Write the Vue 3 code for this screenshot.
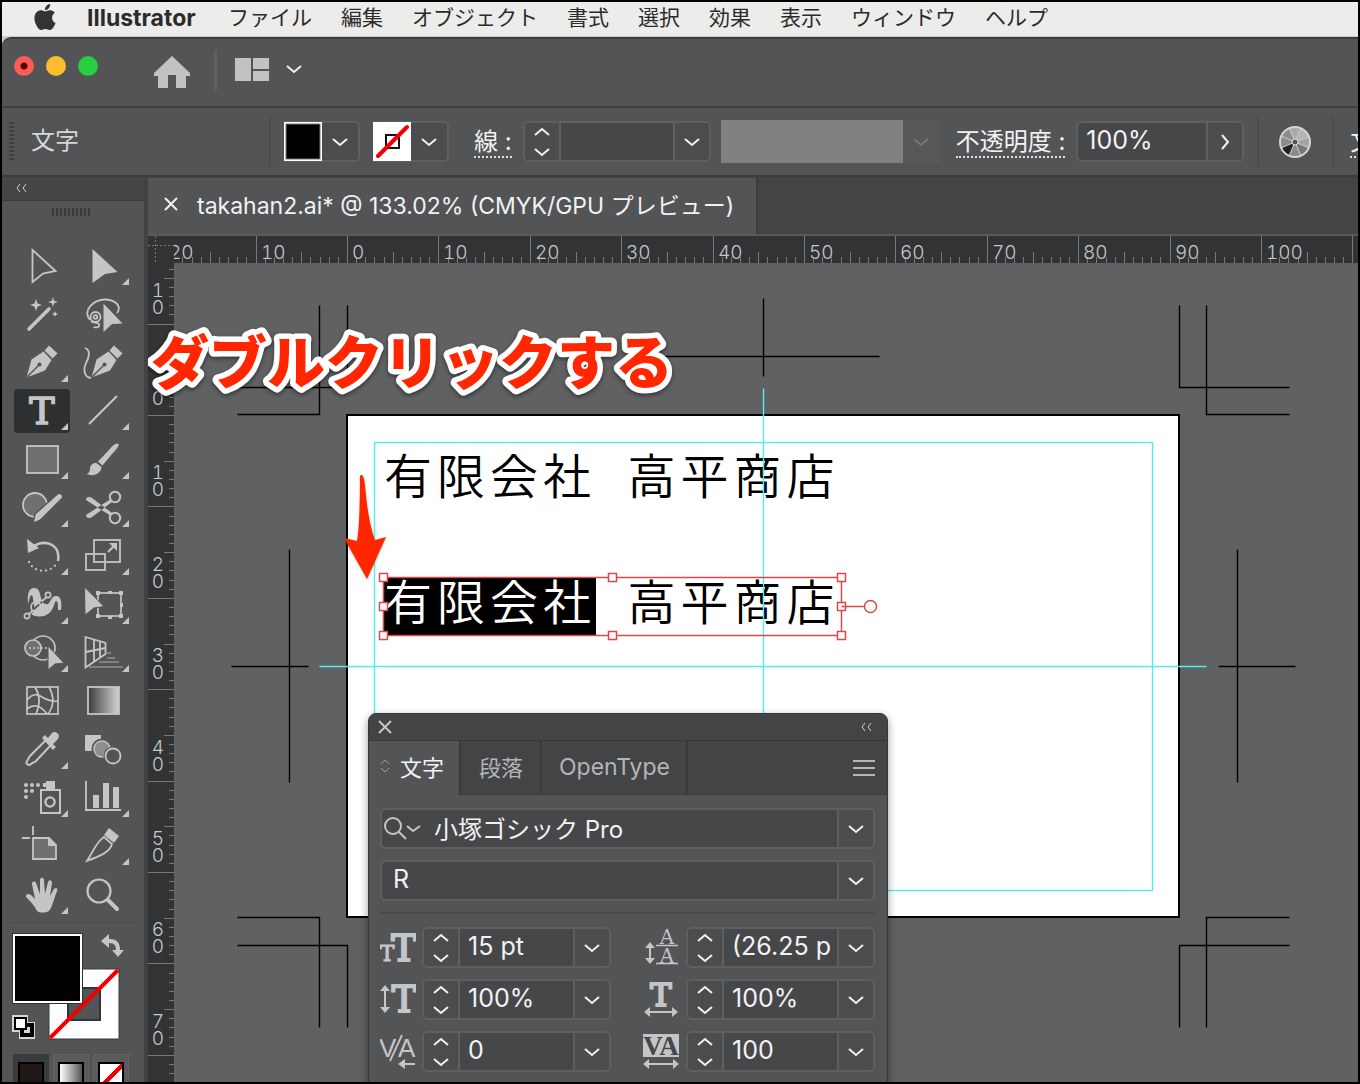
<script setup>
import { ref } from 'vue'

const menus = ['ファイル', '編集', 'オブジェクト', '書式', '選択', '効果', '表示', 'ウィンドウ', 'ヘルプ']

// Ruler geometry: one artboard centimetre is 91.4 screen pixels
const CM = 91.4
const hTicks = []
for (let mm = -19; mm <= 115; mm++) {
  const major = mm % 10 === 0
  hTicks.push({ x: Math.round(199 + (mm * CM) / 10), y: major ? 0 : mm % 5 === 0 ? 16 : 21 })
}
const hLabels = []
for (let cm = -2; cm <= 11; cm++) {
  hLabels.push({ x: Math.round(204 + cm * CM), text: String(Math.abs(cm * 10)) })
}
const vTicks = []
for (let mm = -16; mm <= 75; mm++) {
  const major = mm % 10 === 0
  vTicks.push({ y: Math.round(152 + (mm * CM) / 10), x: major ? 0 : mm % 5 === 0 ? 16 : 21 })
}
const vLabels = []
for (let cm = -1; cm <= 7; cm++) {
  const y = Math.round(152 + cm * CM)
  const digits = String(Math.abs(cm * 10)).split('')
  digits.forEach((d, i) => vLabels.push({ text: d, y: y - 10 - (digits.length - 1 - i) * 17 }))
}

// Printer's trim and centre marks, in canvas coordinates
const marks = [
  'M145 42V151H63', 'M173 42V124H63',
  'M1005 42V124H1115', 'M1032 42V151H1115',
  'M63 654H145V764', 'M63 682H173V764',
  'M1115 654H1032V764', 'M1115 682H1005V764',
  'M589 35V113M473 93H705',
  'M57 403H134M115 286V519',
  'M1044 403H1121M1063 286V519'
]
const handles = [[210, 314], [439, 314], [668, 314], [210, 343], [668, 343], [210, 372], [439, 372], [668, 372]]

const L = '#c4c5c7'
const B = '#535456'
const tools = [
  { name: '選択', art: `<path d="M-9.500-16L13.500 5L1 7.500L-9.500 16Z" fill="none" stroke="${L}" stroke-width="1.800"/>` },
  { name: 'ダイレクト選択', more: true, art: `<path d="M-10.500-17L14.500 6L2 8L-10.500 17Z"/>` },
  { name: '自動選択', art: `<path d="M-13 14L7-6" stroke="${L}" stroke-width="3.600" stroke-linecap="round"/><path d="M-6-16l1.600 4.400 4.400 1.600-4.400 1.600L-6-4l-1.600-4.400L-12-10l4.400-1.600zM11-18l1.200 3.800L16-13l-3.800 1.200L11-8l-1.200-3.800L6-13l3.800-1.200zM13-4l.9 2.100L16-1l-2.100.9L13 2l-.9-2.100L10-1l2.100-.9z"/>` },
  { name: 'なげなわ', art: `<g fill="none" stroke="${L}" stroke-width="1.800"><path d="M-13 5C-21-5-9-16 3-15.500C13-15 19-8 14-2"/><circle cx="-7.500" cy="2" r="5"/><circle cx="-7.500" cy="2" r="1.800"/><path d="M-12 6C-9 9-2 7-4 11C-5 14-9 11-9 13"/></g><path d="M.5-11.500L19.500 8.500L9 9L.5 17Z"/>` },
  { name: 'ペン', more: true, art: `<path d="M-15.500 14.500L-10.500-3.500L1.500-11.500L9.500-3L3 7.500Z"/><path d="M7-17.500L15.500-9.500L10.500-4.500L2.500-12.500Z"/><path d="M-15 14L-3 2" stroke="${B}" stroke-width="1.400"/><circle cx="-2.500" cy="1.500" r="2" fill="${B}"/>` },
  { name: '曲線', art: `<g transform="translate(4)"><path d="M-15.500 14.500L-10.500-3.500L1.500-11.500L9.500-3L3 7.500Z"/><path d="M7-17.500L15.500-9.500L10.500-4.500L2.500-12.500Z"/><path d="M-15 14L-3 2" stroke="${B}" stroke-width="1.400"/><circle cx="-2.500" cy="1.500" r="2" fill="${B}"/></g><path d="M-18-15C-12-13-14-5-17 0C-20 7-19 14-12 15" fill="none" stroke="${L}" stroke-width="1.800"/>` },
  { name: '文字', more: true, active: true, art: `<text x="0" y="13" text-anchor="middle" font-family="DejaVu Serif, serif" font-size="38" stroke="${L}" stroke-width="1.600">T</text>` },
  { name: '直線', more: true, art: `<path d="M-14 13L14-15" stroke="${L}" stroke-width="2.200"/>` },
  { name: '長方形', more: true, art: `<rect x="-15" y="-14" width="31" height="27" fill="#6f7072" stroke="${L}" stroke-width="1.800"/>` },
  { name: 'ブラシ', more: true, art: `<path d="M15.500-16C13.500-18 9-14 6-10L-5 1.500L-.5 5.500L9-6C13-10 17-15 15.500-16Z"/><path d="M-6.500 3C-10 2.500-13 5-13 9C-13 12-15 13.500-16.500 14C-10 17-2 14-1.500 7Z"/>` },
  { name: 'Shaper', more: true, art: `<circle cx="-7" cy="-3" r="12" fill="#6f7072" stroke="${L}" stroke-width="1.800"/><path d="M-9 15.500L-7 6L15.500-14C19-16 22-12 20-9.500L-1.500 12Z" stroke="${B}" stroke-width="1.400"/>` },
  { name: 'はさみ', more: true, art: `<g fill="none" stroke="${L}" stroke-width="2"><circle cx="12" cy="-11" r="5.200"/><circle cx="12" cy="10" r="5.200"/></g><path d="M-17-8C-17-11-14-12-11-10L9 5L8 8L0 3ZM-17 7C-17 10-14 11-11 9L9-6L8-9L0-4Z"/>` },
  { name: '回転', more: true, art: `<path d="M-11-8C-2-17 19-15 16 5" fill="none" stroke="${L}" stroke-width="2.600"/><path d="M-15-17L-14-3L-3-8Z"/><path d="M-13 6C-8 17 8 18 15 7" fill="none" stroke="${L}" stroke-width="2.200" stroke-linecap="round" stroke-dasharray=".1 5"/>` },
  { name: '拡大・縮小', more: true, art: `<g fill="none" stroke="${L}" stroke-width="1.800"><rect x="-9" y="-16" width="26" height="22"/><rect x="-17" y="-2" width="19" height="16"/><path d="M5-4L12-11" stroke-width="2.200"/></g><path d="M6-13H14V-5Z"/>` },
  { name: '線幅', more: true, art: `<path d="M-14-1C-15-12-13-17-8-17C-3-17-2-12-1-7C0-2 3 0 6-1C9-3 9-9 14-9C19-9 20-3 19 5L16 5C16 0 16-4 14-4C12-3 12 8 2 11C-4 12-9 11-11 9C-6 6-8 0-9-6C-9-10-11-11-12-8Z"/><g stroke="${L}" fill="none" stroke-width="1.700"><path d="M-8 4L0-3" stroke="${B}"/><path d="M-13 9L-9 5M0-4L5-8"/><circle cx="-6" cy="2" r="5"/><circle cx="6" cy="-10" r="2.600" fill="${B}"/><circle cx="-15" cy="11" r="2.600" fill="${B}"/></g>` },
  { name: '自由変形', more: true, art: `<rect x="-5" y="-12" width="23" height="23" fill="none" stroke="${L}" stroke-width="1.700"/><path d="M-7-14h4v4h-4zM5-14h4v3h-4zM16-14h4v4h-4zM-7 9h4v4h-4zM5 11h4v3h-4zM16 9h4v4h-4zM17-2h3v4h-3z"/><path d="M-18.500-18L1 1.500L-9 3L-18 10Z" stroke="${B}" stroke-width="1"/>` },
  { name: 'シェイプ形成', more: true, art: `<g fill="none" stroke="${L}" stroke-width="1.700"><circle cx="1" cy="-5" r="12"/><circle cx="-9" cy="-5" r="8" fill="#6f7072"/><path d="M-13-5H6" stroke-dasharray="2 2"/></g><path d="M6-7L22 10L13 11L6 17Z" stroke="${B}" stroke-width="1"/>` },
  { name: '遠近グリッド', more: true, art: `<path d="M4 0H8M4 5H12M-4 9H16M-14 14H20" stroke="#8d8e90" stroke-width="1.600"/><path d="M-17.500-16L2.500-10V1L-17.500 14.500ZM-17.500-1L2.500-5M-9-14V9M-3-12V5" fill="none" stroke="${L}" stroke-width="1.800"/>` },
  { name: 'メッシュ', art: `<g fill="none" stroke="${L}" stroke-width="1.700"><rect x="-15" y="-14" width="31" height="27"/><path d="M-15-1C-9-8-5-7 0-4S10 1 16 0M-7-14C-2-6-2 4-6 13M7-14C12-5 12 5 6 13M-15 8C-8 2-1 5 5 13"/></g>` },
  { name: 'グラデーション', art: `<defs><linearGradient id="toolGrad"><stop offset="0" stop-color="#3a3b3d"/><stop offset="1" stop-color="#d5d5d6"/></linearGradient></defs><rect x="-15" y="-14" width="31" height="27" fill="url(#toolGrad)" stroke="${L}" stroke-width="1.800"/>` },
  { name: 'スポイト', more: true, art: `<path d="M4-10L-12 6C-14 8-13 9-15 11C-17 14-13 16-11 14C-9 12-8 13-6 11L9-5" fill="none" stroke="${L}" stroke-width="2"/><path d="M0-12L3-15L6-12L10-17C14-20 19-15 16-11L11-6L14-3L11 0Z"/>` },
  { name: 'ブレンド', art: `<path d="M-18-15H-2V1H-18Z"/><circle cx="-1" cy="-1" r="9" fill="#8d8e90" stroke="${B}" stroke-width="3"/><circle cx="-1" cy="-1" r="8" fill="none" stroke="${L}" stroke-width="1.500"/><circle cx="10" cy="6" r="9.500" fill="${B}"/><circle cx="10" cy="6" r="7.500" fill="none" stroke="${L}" stroke-width="1.800"/>` },
  { name: 'シンボルスプレー', more: true, art: `<g fill="none" stroke="${L}" stroke-width="2"><rect x="-1" y="-8" width="19" height="23"/><circle cx="8" cy="4" r="4.600" stroke-width="2.400"/></g><path d="M4-17H13V-9H4ZM1-15H4V-11H1Z"/><circle cx="-16" cy="-13" r="2"/><circle cx="-10" cy="-13" r="2"/><circle cx="-4" cy="-13" r="2"/><circle cx="-16" cy="-7" r="2"/><circle cx="-10" cy="-7" r="2"/><circle cx="-16" cy="-1" r="2"/>` },
  { name: '棒グラフ', more: true, art: `<path d="M-17-17V12H18" fill="none" stroke="${L}" stroke-width="1.800"/><path d="M-10-3H-4V10H-10ZM0-15H6V10H0ZM10-11H16V10H10Z"/>` },
  { name: 'アートボード', art: `<path d="M-9-8H7L14-1V13H-9Z" fill="#6f7072" stroke="${L}" stroke-width="1.800"/><path d="M6-9V0H15Z"/><path d="M-9-20V-11M-20-8H-12" stroke="${L}" stroke-width="1.800"/>` },
  { name: 'スライス', more: true, art: `<path d="M6-18L16-10L11-3L1-11Z"/><path d="M1-9L9-2C7 6-3 10-16 15C-9 4-6-5 1-9Z" fill="none" stroke="${L}" stroke-width="1.800"/>` },
  { name: '手のひら', more: true, art: `<path d="M-5 16C-7 11-12 6-16 2C-17-1-13-2-11 0L-7 4L-10-11C-10-14-7-14-6-12L-2-1L-2-15C-2-18 2-18 2-15L3-1L6-13C7-16 10-15 10-12L8 1L12-6C14-8 16-7 15-4C12 3 11 11 7 16C3 18-2 18-5 16Z"/>` },
  { name: 'ズーム', art: `<circle cx="-4" cy="-4" r="11.500" fill="none" stroke="${L}" stroke-width="2.200"/><path d="M5 5L14 14" stroke="${L}" stroke-width="4" stroke-linecap="round"/>` }
]

const slab = `text-anchor="middle" font-family="DejaVu Serif, serif" stroke="${L}"`
const metrics = ref([
  { id: 'size', label: 'フォントサイズ', value: '15 pt', art: `<text x="24" y="32" font-size="38" stroke-width="2" ${slab}>T</text><text x="7" y="32" font-size="22" stroke-width="1" ${slab}>T</text>` },
  { id: 'leading', label: '行送り', value: '(26.25 p', art: `<g font-family="DejaVu Serif, serif" font-size="20" text-anchor="middle"><text x="24" y="15">A</text><text x="24" y="34">A</text></g><path d="M13 16.500H35M13 34.500H35" stroke="${L}" stroke-width="1.500"/><path d="M7 17V32" stroke="${L}" stroke-width="2"/><path d="M7 13L12 19H2ZM7 35L12 29H2Z"/>` },
  { id: 'vscale', label: '垂直比率', value: '100%', art: `<text x="24" y="31" font-size="37" stroke-width="2" ${slab}>T</text><path d="M5 8V28" stroke="${L}" stroke-width="2"/><path d="M5 4L10 10H0ZM5 32L10 26H0Z"/>` },
  { id: 'hscale', label: '水平比率', value: '100%', art: `<text x="18" y="25" font-size="32" stroke-width="2" ${slab}>T</text><path d="M5 31H31" stroke="${L}" stroke-width="2"/><path d="M1 31L7 26V36ZM35 31L29 26V36Z"/>` },
  { id: 'kerning', label: 'カーニング', value: '0', art: `<g font-family="Liberation Sans, sans-serif" font-size="26"><text x="-1" y="24">V</text><text x="18" y="24">A</text></g><path d="M10 28L22 2M22 31H35" stroke="${L}" stroke-width="1.800"/><path d="M18 31L25 26V36Z"/>` },
  { id: 'tracking', label: 'トラッキング', value: '100', art: `<path d="M0 1H36V24H0Z"/><g fill="#464749" font-size="27" font-family="Liberation Serif, serif" font-weight="700" text-anchor="middle"><text x="10" y="22">V</text><text x="26" y="22">A</text></g><path d="M5 31H31" stroke="${L}" stroke-width="2"/><path d="M0 31L6 26V36ZM36 31L30 26V36Z"/>` }
])
const strokeWidth = ref('')
const opacity = ref('100%')
const family = ref('小塚ゴシック Pro')
const fontStyle = ref('R')
</script>

<template>
  <div class="screen">
    <nav class="menubar">
      <svg class="apple" viewBox="0 0 24 24" aria-hidden="true"><path d="M12.152 6.896c-.948 0-2.415-1.078-3.960-1.040-2.040.027-3.910 1.183-4.961 3.014-2.117 3.675-.546 9.103 1.519 12.090 1.013 1.454 2.208 3.090 3.792 3.039 1.520-.065 2.090-.987 3.935-.987 1.831 0 2.350.987 3.960.948 1.637-.026 2.676-1.480 3.676-2.948 1.156-1.688 1.636-3.325 1.662-3.415-.039-.013-3.182-1.221-3.220-4.857-.026-3.040 2.480-4.494 2.597-4.559-1.429-2.090-3.623-2.324-4.390-2.376-2-.156-3.675 1.090-4.610 1.090zM15.530 3.830c.843-1.012 1.400-2.427 1.245-3.830-1.207.052-2.662.805-3.532 1.818-.780.896-1.454 2.338-1.273 3.714 1.338.104 2.715-.688 3.559-1.701" /></svg>
      <button class="menu app-name">Illustrator</button>
      <button v-for="m in menus" :key="m" class="menu">{{ m }}</button>
    </nav>

    <div class="window">
      <header class="titlebar">
        <div class="lights">
          <button class="light red" aria-label="閉じる"></button>
          <button class="light yellow" aria-label="しまう"></button>
          <button class="light green" aria-label="拡大"></button>
        </div>
        <button class="home" aria-label="ホーム">
          <svg width="36" height="36" viewBox="0 0 36 36"><path d="M18 4L36 21V24H32V36H22V23H14V36H4V24H0V21Z" fill="#c1c2c4" /></svg>
        </button>
        <span class="divider light-divider"></span>
        <button class="layout" aria-label="ワークスペース">
          <svg width="68" height="24" viewBox="0 0 68 24"><path d="M0 0H16V23H0ZM18 0H34V11H18ZM18 13H34V23H18Z" fill="#c1c2c4" /><path d="M52 8L59 14L66 8" fill="none" stroke="#f0f0f0" stroke-width="2" /></svg>
        </button>
      </header>

      <section class="controlbar">
        <span class="grip-v"></span>
        <span class="mode">文字</span>
        <span class="divider dark-divider"></span>
        <div class="swatch-field">
          <button class="swatch" aria-label="塗り"><svg width="38" height="39" viewBox="0 0 38 39"><rect width="38" height="39" fill="#fff" /><rect x="2" y="2" width="34" height="35" fill="#000" stroke="#777" stroke-width="1" /></svg></button>
          <button class="drop" aria-label="塗りの一覧"><svg width="16" height="10" viewBox="0 0 16 10"><path d="M1 2L8 8L15 2" /></svg></button>
        </div>
        <div class="swatch-field">
          <button class="swatch" aria-label="線"><svg width="38" height="39" viewBox="0 0 38 39"><rect width="38" height="39" fill="#fff" /><rect x="13" y="13" width="13" height="13" fill="none" stroke="#111" stroke-width="2" /><path d="M5 34L34 5" stroke="#f00000" stroke-width="4" stroke-linecap="round" /></svg></button>
          <button class="drop" aria-label="線の一覧"><svg width="16" height="10" viewBox="0 0 16 10"><path d="M1 2L8 8L15 2" /></svg></button>
        </div>
        <label class="underlined stroke-label" for="stroke">線 :</label>
        <div class="field stroke-field">
          <button class="stepper" aria-label="増減"><svg width="16" height="30" viewBox="0 0 16 30"><path d="M1 8L8 2L15 8M1 22L8 28L15 22" /></svg></button>
          <input id="stroke" v-model="strokeWidth" type="text" />
          <button class="drop" aria-label="線幅の一覧"><svg width="16" height="10" viewBox="0 0 16 10"><path d="M1 2L8 8L15 2" /></svg></button>
        </div>
        <div class="profile">
          <span class="profile-box"></span>
          <button class="drop" disabled aria-label="プロファイル"><svg width="16" height="10" viewBox="0 0 16 10"><path d="M1 2L8 8L15 2" /></svg></button>
        </div>
        <label class="underlined" for="opacity">不透明度 :</label>
        <div class="field opacity-field">
          <input id="opacity" v-model="opacity" type="text" />
          <button class="drop" aria-label="不透明度の設定"><svg width="10" height="16" viewBox="0 0 10 16"><path d="M2 1L8 8L2 15" /></svg></button>
        </div>
        <span class="divider dark-divider"></span>
        <button class="wheel" aria-label="オブジェクトを再配色">
          <svg width="34" height="34" viewBox="-17 -17 34 34">
            <circle r="15" fill="#8a8b8d" />
            <path d="M0 0L6-14A15 15 0 0 1 14-5Z" fill="#b4b5b6" /><path d="M0 0L14-5A15 15 0 0 1 14 6Z" fill="#a2a3a4" />
            <path d="M0 0L14 6A15 15 0 0 1 6 14Z" fill="#777" /><path d="M0 0L-6 14A15 15 0 0 1-14 6Z" fill="#222" />
            <path d="M0 0L-6-14A15 15 0 0 1 6-14Z" fill="#a9aaab" />
            <path d="M0 0L6 14M0 0L-6 14M0 0L-14 6M0 0L-14-6M0 0L-6-14M0 0L6-14M0 0L14-5M0 0L14 6" stroke="#ccc" stroke-width="1" />
            <circle r="15" fill="none" stroke="#d4d5d6" stroke-width="2" /><circle r="3" fill="#555" stroke="#ddd" />
          </svg>
        </button>
        <span class="divider dark-divider"></span>
        <a class="underlined" href="#">文字 :</a>
      </section>

      <main class="work">
        <aside class="toolbox">
          <div class="toolbox-head"><button class="collapse" aria-label="折りたたむ"><svg width="12" height="8" viewBox="0 0 12 8"><path d="M5 0L2 4L5 8M11 0L8 4L11 8" /></svg></button></div>
          <span class="grip-h"></span>
          <div class="tools">
            <button v-for="t in tools" :key="t.name" class="tool" :class="{ active: t.active }" :aria-label="t.name">
              <svg width="56" height="44" viewBox="-28 -22 56 44" fill="#c4c5c7">
                <g v-html="t.art"></g>
                <path v-if="t.more" d="M26 12V19H19Z" />
              </svg>
            </button>
          </div>
          <div class="colors">
            <button class="stroke-box" aria-label="線のカラー">
              <svg width="72" height="72" viewBox="0 0 72 72"><path d="M1 1H71V71H1ZM20 20V52H52V20Z" fill="#fff" fill-rule="evenodd" stroke="#3a3b3d" stroke-width="1" /><rect x="20" y="20" width="32" height="32" fill="none" stroke="#333" stroke-width="2" /><path d="M2 70L70 2" stroke="#f00000" stroke-width="4" /></svg>
            </button>
            <button class="fill-box" aria-label="塗りのカラー"></button>
            <button class="swap" aria-label="塗りと線を入れ替え">
              <svg width="24" height="24" viewBox="0 0 24 24"><path d="M6 7H9Q17 7 17 16V17" fill="none" stroke="#c4c5c7" stroke-width="4" /><path d="M8 0V14L0 7ZM11 16H23L17 23Z" fill="#c4c5c7" /></svg>
            </button>
            <button class="default" aria-label="初期設定">
              <svg width="24" height="24" viewBox="0 0 24 24"><path d="M0 0H16V7H23V24H7V17H0Z" fill="#d4d5d6" /><rect x="10" y="10" width="10" height="10" fill="none" stroke="#000" stroke-width="4" /><rect x="3" y="3" width="11" height="11" fill="#fff" stroke="#000" stroke-width="2" /></svg>
            </button>
          </div>
          <div class="paint-modes">
            <button class="mode-btn on" aria-label="カラー"><span class="chip solid"></span></button>
            <button class="mode-btn" aria-label="グラデーション"><span class="chip grad"></span></button>
            <button class="mode-btn" aria-label="なし"><span class="chip none"></span></button>
          </div>
        </aside>

        <section class="document">
          <div class="tabbar">
            <div class="doc-tab">
              <button class="close" aria-label="タブを閉じる"><svg width="14" height="14" viewBox="0 0 14 14"><path d="M1 1L13 13M13 1L1 13" /></svg></button>
              <span>takahan2.ai* @ 133.02% (CMYK/GPU プレビュー)</span>
            </div>
          </div>
          <div class="sheet">
            <div class="corner"></div>
            <svg class="ruler ruler-h">
              <g transform="translate(-26 0)">
                <path v-for="t in hTicks" :key="t.x" :d="`M${t.x} ${t.y}V27`" />
                <text v-for="l in hLabels" :key="l.x" :x="l.x" y="23">{{ l.text }}</text>
              </g>
            </svg>
            <svg class="ruler ruler-v">
              <path v-for="t in vTicks" :key="t.y" :d="`M${t.x} ${t.y}H26`" />
              <text v-for="l in vLabels" :key="l.y" x="10" :y="l.y" text-anchor="middle">{{ l.text }}</text>
            </svg>
            <div class="canvas">
              <div class="artboard"></div>
              <p class="art-text first">有限会社&nbsp;&nbsp;高平商店</p>
              <p class="art-text second"><mark>有限会社</mark>&nbsp;&nbsp;高平商店</p>
              <svg class="overlay">
                <g class="marks" transform="translate(.5 .5)"><path v-for="d in marks" :key="d" :d="d" /></g>
                <g class="guides" transform="translate(.5 .5)">
                  <path d="M589 125V500M145 403H1032" />
                  <rect x="200" y="179" width="778" height="448" />
                </g>
                <g class="bounds" transform="translate(-.5 .5)">
                  <rect x="210" y="314" width="458" height="58" />
                  <rect v-for="h in handles" :key="h.join()" class="handle" :x="h[0] - 4" :y="h[1] - 4" width="8" height="8" />
                  <path d="M668 343H691" />
                  <circle cx="697" cy="343" r="6" />
                </g>
                <path class="arrow" d="M186 213Q187 211 189 213Q190 215 191 222Q194 259 201 277L212 274L193 316L170 275L183 278Q186 262 186 213Z" />
                <text class="callout" x="-23" y="121">ダブルクリックする</text>
              </svg>

              <section class="panel">
                <div class="panel-head">
                  <button class="close" aria-label="パネルを閉じる"><svg width="14" height="14" viewBox="0 0 14 14"><path d="M1 1L13 13M13 1L1 13" /></svg></button>
                  <button class="collapse" aria-label="アイコン化"><svg width="12" height="8" viewBox="0 0 12 8"><path d="M5 0L2 4L5 8M11 0L8 4L11 8" /></svg></button>
                </div>
                <div class="panel-tabs">
                  <button class="ptab current"><svg width="10" height="14" viewBox="0 0 10 14"><path d="M1 5L5 1L9 5M1 9L5 13L9 9" /></svg>文字</button>
                  <button class="ptab">段落</button>
                  <button class="ptab latin">OpenType</button>
                  <button class="burger" aria-label="パネルメニュー"><svg width="22" height="16" viewBox="0 0 22 16"><path d="M0 1H22M0 8H22M0 15H22" /></svg></button>
                </div>
                <div class="panel-body">
                  <div class="field family-field">
                    <span class="finder"><svg width="38" height="24" viewBox="0 0 38 24"><circle cx="9" cy="9" r="8" /><path d="M15 15L22 22M23 9L29 14L36 9" /></svg></span>
                    <input v-model="family" type="text" aria-label="フォントファミリ" />
                    <button class="drop" aria-label="フォントの一覧"><svg width="16" height="10" viewBox="0 0 16 10"><path d="M1 2L8 8L15 2" /></svg></button>
                  </div>
                  <div class="field style-field">
                    <input v-model="fontStyle" type="text" aria-label="フォントスタイル" />
                    <button class="drop" aria-label="スタイルの一覧"><svg width="16" height="10" viewBox="0 0 16 10"><path d="M1 2L8 8L15 2" /></svg></button>
                  </div>
                  <hr />
                  <div class="metrics">
                    <div v-for="m in metrics" :key="m.id" class="metric">
                      <label :for="m.id" :aria-label="m.label"><svg width="36" height="37" viewBox="0 0 36 37" fill="#c4c5c7" v-html="m.art"></svg></label>
                      <div class="field">
                        <button class="stepper" aria-label="増減"><svg width="16" height="30" viewBox="0 0 16 30"><path d="M1 8L8 2L15 8M1 22L8 28L15 22" /></svg></button>
                        <input :id="m.id" v-model="m.value" type="text" />
                        <button class="drop" aria-label="値の一覧"><svg width="16" height="10" viewBox="0 0 16 10"><path d="M1 2L8 8L15 2" /></svg></button>
                      </div>
                    </div>
                  </div>
                </div>
              </section>
            </div>
          </div>
        </section>
      </main>
    </div>
  </div>
</template>

<style>
body { margin: 0; background: #000; }
</style>

<style scoped>
* { box-sizing: border-box; }
.screen {
  display: flex;
  flex-direction: column;
  height: 100vh;
  border: 2px solid #000;
  background: #c9cac9;
  overflow: hidden;
  font-family: Inter, "Noto Sans CJK JP", sans-serif;
  font-size: 22px;
  color: #f2f2f2;
}
button, input {
  margin: 0;
  padding: 0;
  border: 0;
  background: none;
  color: inherit;
  font: inherit;
}
svg { display: block; flex: none; }

.menubar {
  display: flex;
  align-items: center;
  gap: 29px;
  height: 34px;
  flex: none;
  padding: 0 0 2px 30px;
  background: #ecedeb;
  color: #2b2b2b;
}
.apple { width: 26px; height: 26px; fill: #333; margin-bottom: 2px; }
.menu { font-size: 21px; line-height: 32px; white-space: nowrap; }
.app-name { font-size: 23px; font-weight: 700; width: 112px; text-align: left; }

.window {
  flex: 1;
  min-height: 0;
  display: flex;
  flex-direction: column;
  margin-top: 1px;
  border-top: 2px solid #3b3c3e;
  border-radius: 9px 0 0 0;
  background: #535456;
}
.titlebar {
  display: flex;
  align-items: center;
  flex: none;
  height: 69px;
  padding: 0 0 6px 12px;
  border-bottom: 2px solid #3d3e40;
}
.lights { display: flex; gap: 12px; padding-bottom: 8px; margin-right: 56px; }
.light { width: 20px; height: 20px; border-radius: 50%; }
.red { background: radial-gradient(circle, #5a0500 3px, #fc5b57 4px); }
.yellow { background: #fdbc2e; }
.green { background: #28cd41; }
.divider { flex: none; align-self: center; }
.light-divider { width: 3px; height: 40px; margin: 0 18px 0 24px; background: #5f6062; }
.dark-divider { width: 2px; height: 50px; background: #4b4c4e; }

.controlbar {
  display: flex;
  align-items: center;
  flex: none;
  height: 69px;
  padding-left: 7px;
  border-bottom: 2px solid #3b3c3e;
  overflow: hidden;
  white-space: nowrap;
}
.grip-v { flex: none; width: 5px; height: 40px; background: repeating-linear-gradient(#3d3e40 0 2px, transparent 2px 4px); }
.mode { flex: none; width: 255px; padding-left: 17px; font-size: 24px; line-height: 36px; margin-bottom: 2px; color: #d6d7d8; }
.swatch-field { display: flex; flex: none; align-items: center; margin-left: 13px; border: 2px solid #5e5f61; border-left: 0; border-radius: 0 5px 5px 0; background: #4d4e50; height: 41px; }
.drop, .stepper {
  display: flex;
  align-items: center;
  justify-content: center;
  flex: none;
  width: 36px;
  align-self: stretch;
  background: #4b4c4e;
}
.drop svg, .stepper svg, .close svg, .collapse svg, .ptab svg, .burger svg, .finder svg { fill: none; stroke: #f2f2f2; stroke-width: 2; }
.drop { border-radius: 0 4px 4px 0; }
.underlined {
  flex: none;
  margin: 2px 0 0 16px;
  border-bottom: 2px dotted #e0e0e0;
  font-size: 24px;
  line-height: 29px;
  color: #f2f2f2;
  text-decoration: none;
}
.stroke-label { margin-left: 25px; }
.field {
  display: flex;
  align-items: stretch;
  flex: none;
  height: 41px;
  border: 2px solid #5e5f61;
  border-radius: 6px;
  background: #464749;
}
.field input {
  flex: 1;
  min-width: 0;
  width: 0;
  padding: 0 0 3px 8px;
  outline: 0;
  font-size: 25px;
}
.field .drop { border-left: 2px solid #5e5f61; }
.field .stepper { border-right: 2px solid #5e5f61; border-radius: 4px 0 0 4px; }
.stroke-field { width: 188px; margin-left: 11px; }
.profile { display: flex; flex: none; height: 43px; margin-left: 10px; }
.profile-box { width: 182px; background: #808183; }
.profile .drop { width: 37px; background: #575859; }
.profile .drop svg { stroke: #77787a; }
.opacity-field { width: 168px; margin: 0 13px 0 11px; }
.wheel { margin: 0 20px 0 19px; }

.work { display: flex; flex: 1; min-height: 0; }
.toolbox {
  display: flex;
  flex-direction: column;
  flex: none;
  width: 146px;
  border-right: 4px solid #414244;
  overflow: hidden;
}
.toolbox-head { display: flex; align-items: center; flex: none; height: 24px; padding: 0 0 2px 13px; background: #444547; border-bottom: 1px solid #3b3c3e; }
.collapse svg { stroke: #d0d1d2; stroke-width: 1px; }
.grip-h { flex: none; width: 40px; height: 8px; margin: 7px 0 26px 50px; background: repeating-linear-gradient(90deg, #3a3b3d 0 2px, transparent 2px 4px); }
.tools {
  display: grid;
  grid-template-columns: 61px 61px;
  grid-auto-rows: 1fr;
  flex: none;
  height: 677px;
  margin-left: 9px;
}
.tool { display: flex; align-items: center; justify-content: center; }
.tool svg { border-radius: 4px; overflow: visible; }
.tool.active svg { background: #2e2f31; }
.colors { position: relative; flex: none; height: 120px; margin: 3px 9px 0; border-top: 1px solid #4a4b4d; }
.colors button { position: absolute; }
.fill-box { left: 1px; top: 10px; width: 71px; height: 71px; border: 1px solid #333; background: #000; box-shadow: inset 0 0 0 2px #fff; }
.stroke-box { left: 37px; top: 45px; }
.swap { left: 90px; top: 11px; }
.default { left: 1px; top: 92px; }
.paint-modes { display: flex; flex: none; gap: 4px; margin: 12px 0 0 11px; height: 44px; }
.mode-btn { width: 36px; padding: 7px 4px 0; background: #5a5b5d; border: 1px solid #626365; display: flex; }
.mode-btn.on { background: #3a3b3d; border-color: #3a3b3d; }
.chip { width: 26px; height: 30px; border: 2px solid #000; }
.solid { background: #211815; }
.grad { background: linear-gradient(90deg, #fff, #555); }
.none { background: linear-gradient(135deg, #fff 42%, #f00000 42% 56%, #fff 56%); }

.document { display: flex; flex-direction: column; flex: 1; min-width: 0; }
.tabbar { display: flex; flex: none; height: 59px; padding-top: 1px; background: #434446; border-bottom: 2px solid #58595b; }
.doc-tab { display: flex; align-items: center; gap: 19px; width: 610px; padding: 0 0 4px 16px; background: #535456; border-right: 2px solid #3b3c3e; font-size: 23px; white-space: nowrap; }
.sheet { display: grid; grid-template-columns: 26px 1fr; grid-template-rows: 27px 1fr; flex: 1; min-height: 0; overflow: hidden; }
.corner {
  background:
    linear-gradient(90deg, #777 50%, transparent 50%) 0 9px / 4px 1px repeat-x,
    linear-gradient(#777 50%, transparent 50%) 7px 0 / 1px 4px repeat-y,
    #323335;
}
.ruler { width: 100%; height: 100%; background: #323335; overflow: hidden; }
.ruler path { stroke: #77787a; stroke-width: 1; shape-rendering: crispEdges; }
.ruler text { font-size: 19px; font-weight: 300; font-variant-numeric: tabular-nums; fill: #c6c7c8; }
.canvas { position: relative; min-width: 0; background: #606163; }
.artboard {
  position: absolute;
  left: 172px;
  top: 151px;
  width: 834px;
  height: 504px;
  border: 2px solid #000;
  background: #fff;
}
.art-text {
  position: absolute;
  left: 210px;
  margin: 0;
  font-family: "Noto Sans CJK JP", sans-serif;
  font-size: 48px;
  font-weight: 350;
  line-height: 44px;
  letter-spacing: 5px;
  color: #000;
  white-space: nowrap;
}
.art-text.first { top: 188px; }
.art-text.second { top: 314px; }
.art-text mark { display: inline-block; height: 58px; background: #000; color: #fff; }
.overlay { position: absolute; inset: 0; width: 100%; height: 100%; overflow: visible; }
.overlay path, .overlay rect { fill: none; }
.marks path { stroke: #000; stroke-width: 1.4; }
.guides { stroke: #4ff0f0; stroke-width: 1.4; }
.bounds { stroke: #e0474b; stroke-width: 1.5; fill: none; }
.overlay .handle { fill: #fff; }
.overlay .arrow { fill: #ff2600; filter: drop-shadow(0 1px 1px #0004); }
.callout {
  font-family: "Noto Sans CJK JP", sans-serif;
  font-size: 58px;
  font-weight: 900;
  fill: #ff2600;
  stroke: #fff;
  stroke-width: 11px;
  stroke-linejoin: round;
  paint-order: stroke;
  filter: drop-shadow(0 2px 2px #0007);
}

.panel {
  position: absolute;
  left: 194px;
  top: 450px;
  width: 520px;
  height: 400px;
  border: 1px solid #37383a;
  border-radius: 8px 8px 0 0;
  background: #535456;
  box-shadow: 0 3px 8px #0006;
  overflow: hidden;
}
.panel-head { display: flex; align-items: center; justify-content: space-between; height: 27px; padding: 0 15px 0 9px; background: #434446; border-bottom: 1px solid #37383a; }
.panel-head .close svg { stroke: #c4c5c7; }
.panel-tabs { display: flex; height: 54px; background: #434446; }
.ptab { display: flex; align-items: center; padding: 0 17px 4px 18px; border-right: 2px solid #393a3c; border-bottom: 1px solid #393a3c; color: #b4b5b6; }
.ptab.latin { padding: 0 16px 2px 17px; font-size: 23px; }
.ptab.current { gap: 10px; padding: 0 15px 5px 11px; background: #535456; color: #f2f2f2; border-bottom: 0; }
.ptab svg { stroke: #9b9c9e; stroke-width: 1; }
.burger { flex: 1; display: flex; align-items: center; justify-content: flex-end; padding-right: 12px; border-bottom: 1px solid #393a3c; }
.burger svg { stroke: #b4b5b6; }
.panel-body { padding: 13px 12px 0 11px; display: flex; flex-direction: column; gap: 11px; }
.finder { display: flex; align-items: center; width: 44px; padding-left: 2px; }
.finder svg { stroke: #c4c5c7; }
.family-field input { font-size: 24px; }
.style-field input { padding-left: 11px; }
hr { width: 100%; height: 2px; margin: 0; border: 0; background: #4a4b4d; }
.metrics { display: grid; grid-template-columns: 231px 232px; column-gap: 32px; row-gap: 11px; padding-top: 2px; }
.metric { display: flex; align-items: center; justify-content: space-between; }
.metric .field { width: 189px; }
</style>
